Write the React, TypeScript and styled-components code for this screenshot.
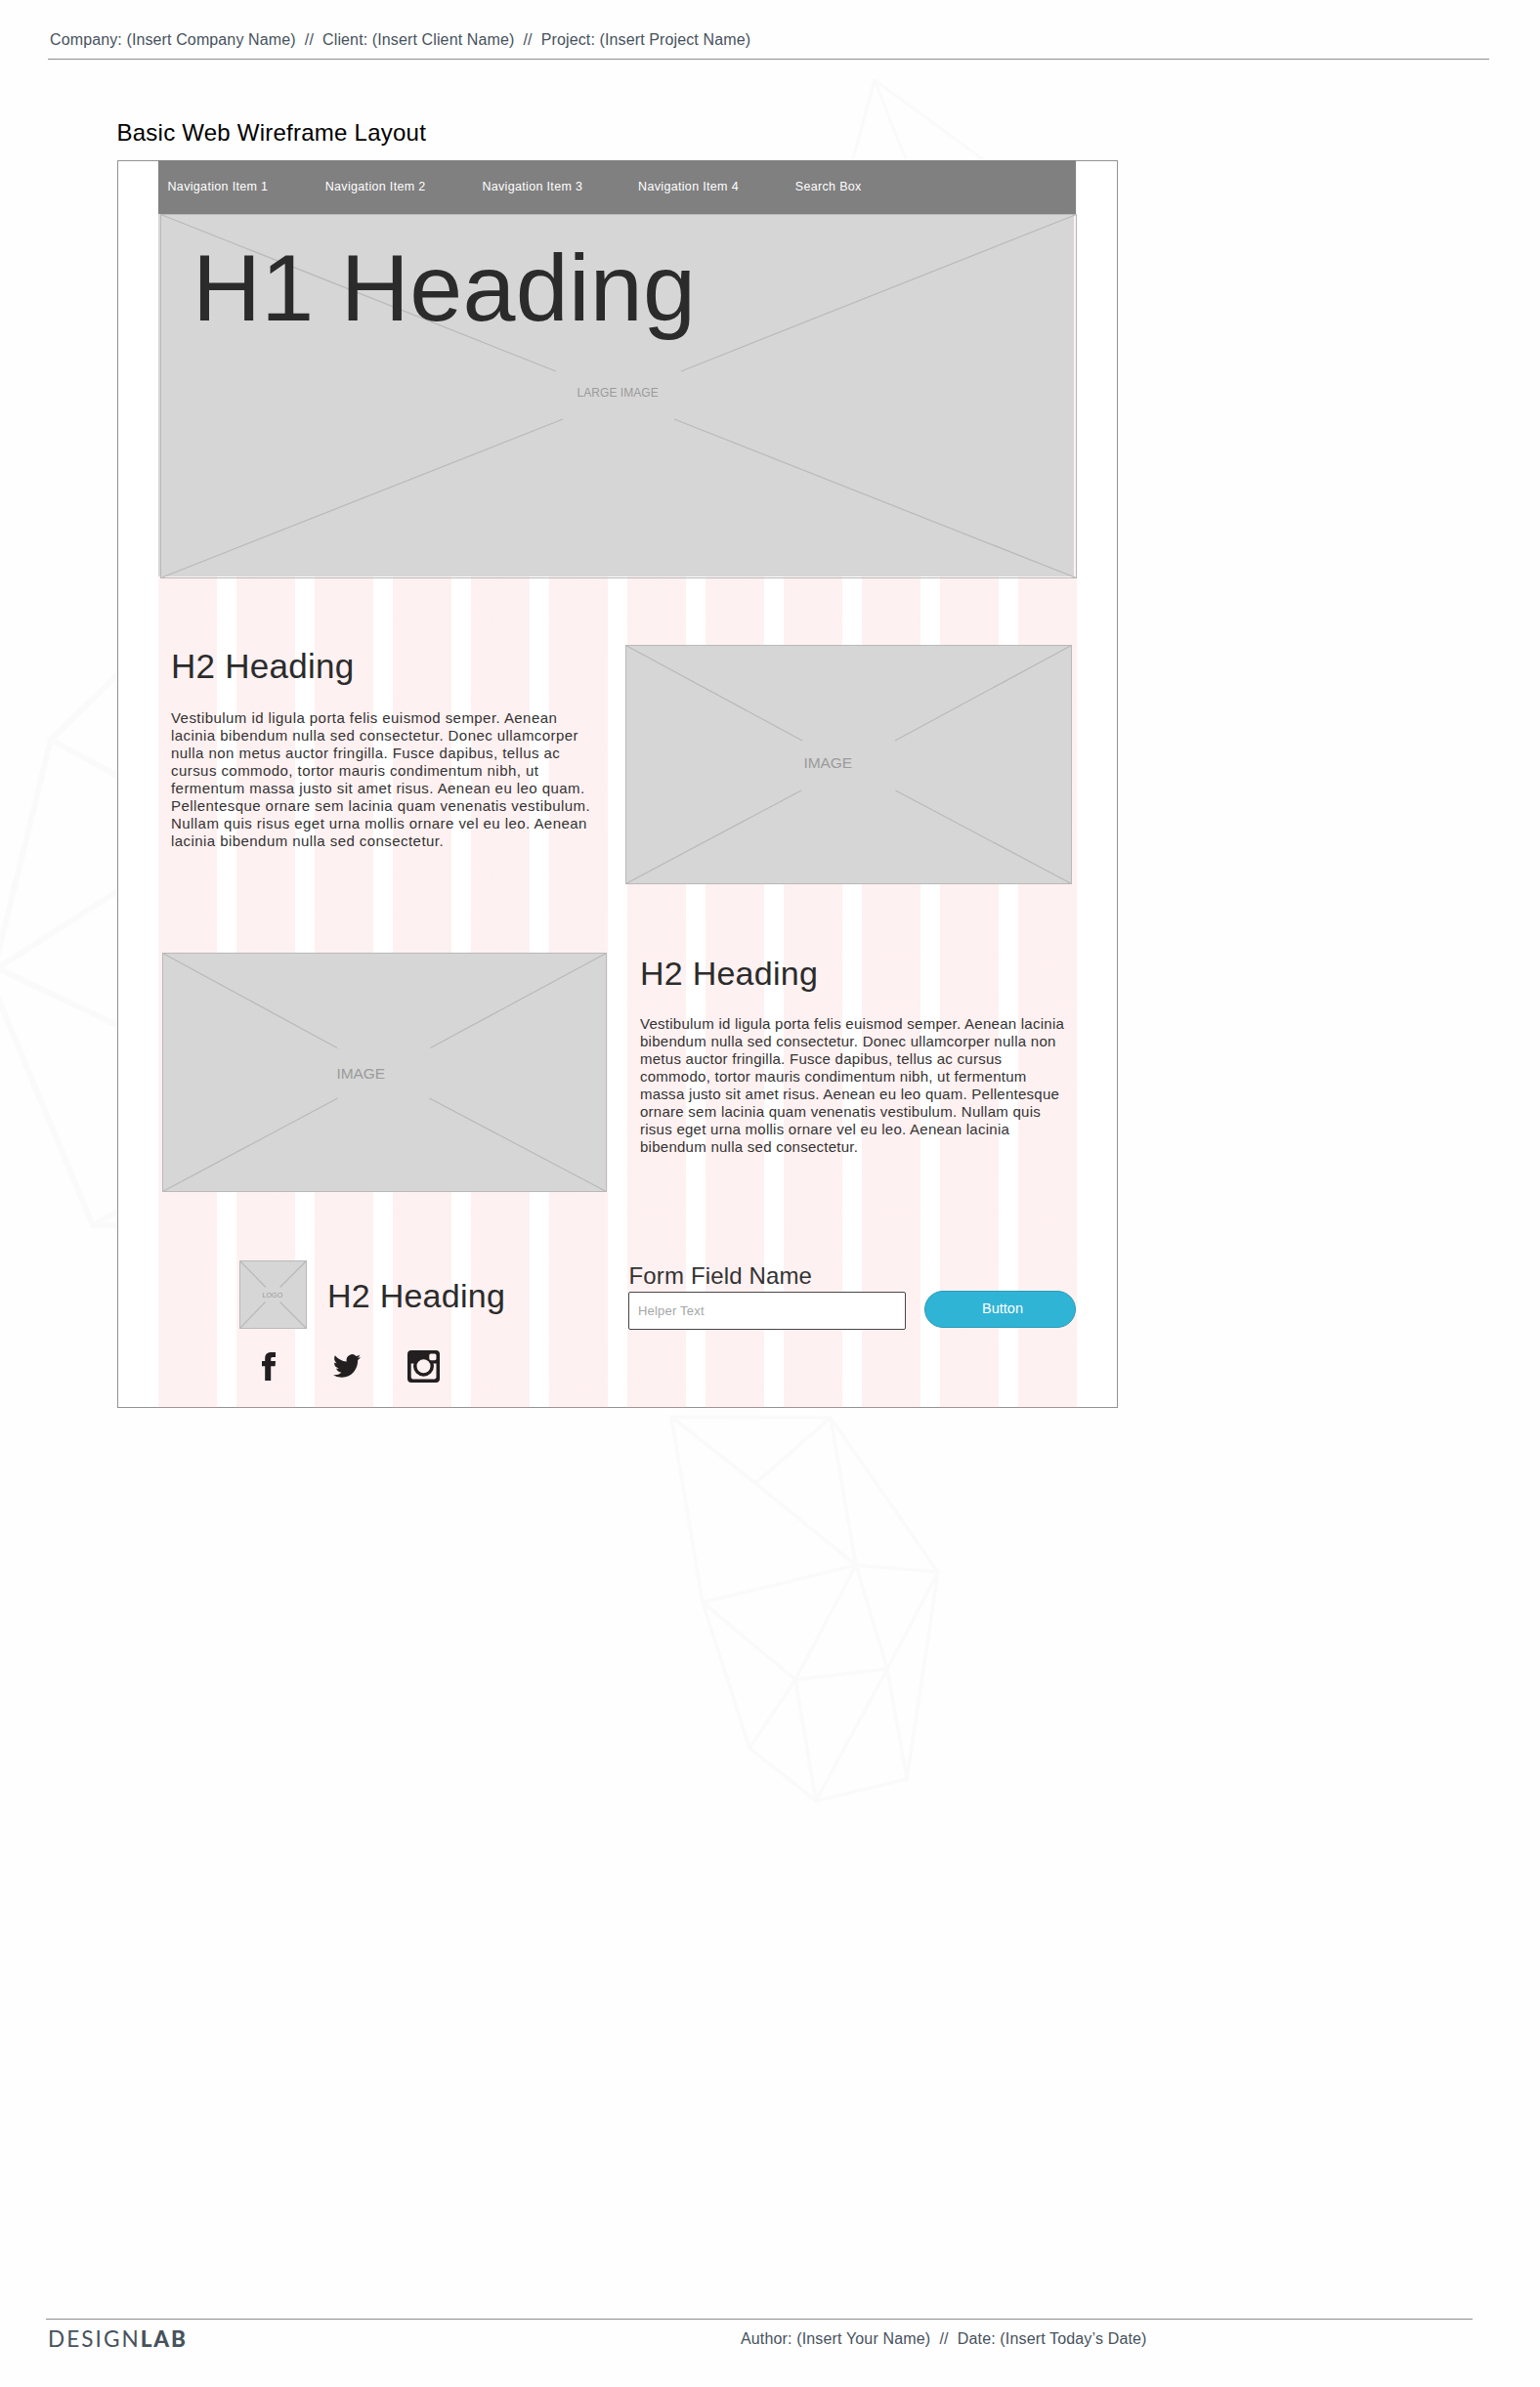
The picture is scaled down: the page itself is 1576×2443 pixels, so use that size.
import React from "react";
import styled, { createGlobalStyle } from "styled-components";

const GlobalStyle = createGlobalStyle`
  * { box-sizing: border-box; }
  body {
    margin: 0;
    background: #fefefe;
    font-family: "Liberation Sans", Arial, Helvetica, sans-serif;
  }
  h1, h2, p { margin: 0; font-weight: 400; }
`;

const Page = styled.div`
  position: relative;
  width: 1576px;
  height: 2443px;
  display: flex;
  flex-direction: column;
  overflow: hidden;
`;

const Backdrop = styled.svg`
  position: absolute;
  inset: 0;
  z-index: -1;
  fill: none;
  stroke: #fafafa;
  stroke-linejoin: round;
`;

const DocHeader = styled.header`
  height: 61px;
  margin: 0 52px 0 49px;
  padding: 31px 0 0 2px;
  border-bottom: 1px solid #8e8e8e;
`;

const MetaText = styled.div<{ $track: number }>`
  font-size: 16px;
  line-height: 20px;
  letter-spacing: ${(p) => p.$track}px;
  color: #47525d;
  white-space: pre;
`;

const BoardTitle = styled.h1`
  margin: 61px 0 14px 119.5px;
  font-size: 24px;
  line-height: 28px;
  letter-spacing: 0.24px;
  color: #000;
`;

const Frame = styled.main`
  width: 1024px;
  height: 1277px;
  margin-left: 120px;
  padding-left: 41px;
  border: 1px solid #929292;
  background: #fff;
`;

const Canvas = styled.div`
  width: 940px;
  height: 1277px;
  margin-top: -1px;
  background: repeating-linear-gradient(
    to right,
    rgba(250, 160, 160, 0.15) 0 60px,
    transparent 60px 80px
  );
`;

const Nav = styled.nav`
  display: grid;
  grid-template-columns: 161.2px 160.7px 159.7px 160.7px auto;
  align-items: center;
  width: 939px;
  height: 55px;
  padding: 0 0 2px 9.5px;
  background: #808080;
`;

const NavItem = styled.span`
  font-size: 12.5px;
  line-height: 16px;
  letter-spacing: 0.33px;
  color: #fff;
`;

const Hero = styled.section`
  display: grid;
  height: 373px;
  & > * { grid-area: 1 / 1; }
`;

const HeroTitle = styled.h1`
  z-index: 1;
  padding: 21px 0 0 35px;
  font-size: 97px;
  line-height: 110px;
  letter-spacing: 0.3px;
  color: #2b2b2b;
`;

const Box = styled.div<{ $w: number; $h: number; $ml?: number }>`
  position: relative;
  flex: none;
  width: ${(p) => p.$w}px;
  height: ${(p) => p.$h}px;
  margin-left: ${(p) => p.$ml ?? 0}px;
`;

const BoxArt = styled.svg`
  display: block;
  overflow: visible;
  fill: none;
  stroke: #b9b9b9;
`;

const BoxLabel = styled.span<{ $x: number; $y: number; $size: number; $track: number }>`
  position: absolute;
  left: ${(p) => p.$x}px;
  top: ${(p) => p.$y}px;
  font-size: ${(p) => p.$size}px;
  line-height: 20px;
  letter-spacing: ${(p) => p.$track}px;
  color: #9b9b9b;
  white-space: nowrap;
`;

const Row = styled.section<{ $top: number; $h: number }>`
  display: flex;
  align-items: flex-start;
  height: ${(p) => p.$h}px;
  margin-top: ${(p) => p.$top}px;
`;

const Column = styled.div<{ $w: number; $pl: number; $pt?: number }>`
  flex: none;
  width: ${(p) => p.$w}px;
  padding: ${(p) => p.$pt ?? 0}px 0 0 ${(p) => p.$pl}px;
`;

const Heading = styled.h2<{ $size: number }>`
  font-size: ${(p) => p.$size}px;
  line-height: 40px;
  letter-spacing: 0.25px;
  color: #2b2b2b;
`;

const Copy = styled.p<{ $top: number; $track: number }>`
  margin-top: ${(p) => p.$top}px;
  font-size: 15px;
  line-height: 18px;
  letter-spacing: ${(p) => p.$track}px;
  color: #333;
  span { display: block; white-space: nowrap; }
`;

const Brand = styled.div`
  display: flex;
  h2 { padding: 16px 0 0 21px; }
`;

const Socials = styled.div`
  display: flex;
  align-items: center;
  height: 34px;
  margin: 21px 0 0 23px;
  svg { display: block; fill: #231f20; }
`;

const FacebookIcon = styled.svg`
  width: 14px;
  height: 29px;
`;

const TwitterIcon = styled.svg`
  width: 28px;
  height: 24px;
  margin-left: 58.5px;
`;

const InstagramIcon = styled.svg`
  width: 33px;
  height: 33px;
  margin-left: 48.5px;
`;

const Form = styled.form`
  display: flex;
`;

const Field = styled.label`
  display: flex;
  flex-direction: column;
  gap: 2px;
  width: 284px;
  font-size: 24px;
  line-height: 28px;
  letter-spacing: 0.15px;
  color: #333;
  & > span { padding-left: 0.5px; }
`;

const Input = styled.input`
  height: 39px;
  padding: 0 9px;
  border: 1px solid #4a4546;
  border-radius: 2px;
  background: #fff;
  outline: none;
  font: 400 13px "Liberation Sans", Arial, sans-serif;
  letter-spacing: 0.2px;
  &::placeholder { color: #a6a6a6; opacity: 1; }
`;

const Button = styled.button`
  width: 155px;
  height: 38px;
  margin: 29px 0 0 19px;
  padding: 0 0 3px 5px;
  border: 1px solid #2a9cb8;
  border-radius: 19px;
  background: #30b4d5;
  color: #fff;
  font: 400 14.5px "Liberation Sans", Arial, sans-serif;
  letter-spacing: 0;
`;

const DocFooter = styled.footer`
  display: flex;
  height: 70px;
  margin: auto 69px 0 47px;
  border-top: 1px solid #8e8e8e;
`;

const Wordmark = styled.div`
  width: 710px;
  padding: 6px 0 0 2px;
  font-family: Lato, sans-serif;
  font-size: 22.5px;
  line-height: 28px;
  letter-spacing: 2.1px;
  color: #47525d;
  b { font-weight: 900; letter-spacing: 1.8px; }
`;

const FooterMeta = styled.div`
  padding: 10px 0 0 1px;
`;

type Pt = [number, number];

/* A crossed image box; `gap` holds the four inner ends of the diagonals. */
function Placeholder(props: {
  w: number; h: number; ml?: number;
  fill: [number, number, number, number];
  edge: [number, number, number, number];
  gap: [Pt, Pt, Pt, Pt];
  label: string; lx: number; ly: number; size: number; track: number;
}) {
  const { w, h, fill, edge, gap } = props;
  const [l, t, r, b] = edge;
  const corners: Pt[] = [[l, t], [r, t], [l, b], [r, b]];
  return (
    <Box $w={w} $h={h} $ml={props.ml}>
      <BoxArt width={w} height={h}>
        <rect x={fill[0]} y={fill[1]} width={fill[2]} height={fill[3]} fill="#d6d6d6" stroke="none" />
        <rect x={l} y={t} width={r - l} height={b - t} />
        {corners.map(([x, y], i) => (
          <line key={i} x1={x} y1={y} x2={gap[i][0]} y2={gap[i][1]} strokeWidth={1.2} />
        ))}
      </BoxArt>
      <BoxLabel $x={props.lx} $y={props.ly} $size={props.size} $track={props.track}>{props.label}</BoxLabel>
    </Box>
  );
}

const navItems = ["Navigation Item 1", "Navigation Item 2", "Navigation Item 3", "Navigation Item 4", "Search Box"];

const copyLeft = [
  "Vestibulum id ligula porta felis euismod semper. Aenean",
  "lacinia bibendum nulla sed consectetur. Donec ullamcorper",
  "nulla non metus auctor fringilla. Fusce dapibus, tellus ac",
  "cursus commodo, tortor mauris condimentum nibh, ut",
  "fermentum massa justo sit amet risus. Aenean eu leo quam.",
  "Pellentesque ornare sem lacinia quam venenatis vestibulum.",
  "Nullam quis risus eget urna mollis ornare vel eu leo. Aenean",
  "lacinia bibendum nulla sed consectetur.",
];

const copyRight = [
  "Vestibulum id ligula porta felis euismod semper. Aenean lacinia",
  "bibendum nulla sed consectetur. Donec ullamcorper nulla non",
  "metus auctor fringilla. Fusce dapibus, tellus ac cursus",
  "commodo, tortor mauris condimentum nibh, ut fermentum",
  "massa justo sit amet risus. Aenean eu leo quam. Pellentesque",
  "ornare sem lacinia quam venenatis vestibulum. Nullam quis",
  "risus eget urna mollis ornare vel eu leo. Aenean lacinia",
  "bibendum nulla sed consectetur.",
];

export default function App() {
  return (
    <>
      <GlobalStyle />
      <Page>
        <Backdrop width={1576} height={2443}>
          <path strokeWidth={3} d="M872 166L895 82L928 166M895 82L1010 166" />
          <path strokeWidth={6} d="M122 689L52 757L122 795M52 757L-3 980M122 911L-3 991L122 1050M-6 1012L95 1254L122 1239M95 1254H122" />
          <path
            strokeWidth={3.6}
            d="M687 1450L850 1451L960 1609L928 1821L835 1843L767 1789L719 1640ZL773 1518L876 1602L960 1609L908 1708L928 1821M773 1518L850 1451L876 1602L908 1708L835 1843L814 1719L767 1789M719 1640L876 1602L814 1719L908 1708M719 1640L814 1719"
          />
        </Backdrop>

        <DocHeader>
          <MetaText $track={0.12}>{"Company: (Insert Company Name)  //  Client: (Insert Client Name)  //  Project: (Insert Project Name)"}</MetaText>
        </DocHeader>

        <BoardTitle>Basic Web Wireframe Layout</BoardTitle>

        <Frame>
          <Canvas>
            <Nav>
              {navItems.map((n) => <NavItem key={n}>{n}</NavItem>)}
            </Nav>

            <Hero>
              <Placeholder
                w={940} h={373}
                fill={[0, 0, 937, 371]} edge={[2.5, 0.5, 939.5, 372.5]}
                gap={[[407, 161], [535, 161], [414, 210], [528, 210]]}
                label="LARGE IMAGE" lx={428.5} ly={173} size={12} track={0.05}
              />
              <HeroTitle>H1 Heading</HeroTitle>
            </Hero>

            <Row $top={68} $h={245}>
              <Column $w={478} $pl={13} $pt={2}>
                <Heading $size={35}>H2 Heading</Heading>
                <Copy $top={24} $track={0.44}>{copyLeft.map((t) => <span key={t}>{t}</span>)}</Copy>
              </Column>
              <Placeholder
                w={457} h={245}
                fill={[0, 0, 457, 245]} edge={[0.5, 0.5, 456.5, 244.5]}
                gap={[[181, 98], [276, 98], [180, 149], [276.5, 149]]}
                label="IMAGE" lx={182.5} ly={111} size={15.5} track={-0.1}
              />
            </Row>

            <Row $top={70} $h={245}>
              <Placeholder
                w={455} h={245} ml={4}
                fill={[0, 0, 455, 245]} edge={[0.5, 0.5, 454.5, 244.5]}
                gap={[[179, 97.5], [274.5, 97.5], [179.5, 149], [273.5, 149]]}
                label="IMAGE" lx={178.5} ly={114} size={15.5} track={-0.1}
              />
              <Column $w={470} $pl={34} $pt={1}>
                <Heading $size={34}>H2 Heading</Heading>
                <Copy $top={23} $track={0.26}>{copyRight.map((t) => <span key={t}>{t}</span>)}</Copy>
              </Column>
            </Row>

            <Row $top={70} $h={151}>
              <Column $w={481} $pl={83}>
                <Brand>
                  <Placeholder
                    w={69} h={70}
                    fill={[0, 0, 69, 70]} edge={[0.5, 0.5, 68.5, 69.5]}
                    gap={[[27, 27.5], [41.5, 27.5], [26.5, 42.5], [41.5, 42.5]]}
                    label="LOGO" lx={23.5} ly={25.5} size={7.2} track={0}
                  />
                  <Heading $size={34}>H2 Heading</Heading>
                </Brand>
                <Socials>
                  <FacebookIcon viewBox="0 0 14 29">
                    <path d="M3.2 29V14.2H0V8.9H3.2V6.6C3.2 2.3 5 0 9.7 0H14V5H11.3C9.4 5 9.2 5.7 9.2 7.1V8.9H14L13.6 14.2H9.2V29Z" />
                  </FacebookIcon>
                  <TwitterIcon viewBox="0 2.1 24 19.8" preserveAspectRatio="none">
                    <path d="M23.953 4.57a10 10 0 01-2.825.775 4.958 4.958 0 002.163-2.723c-.951.555-2.005.959-3.127 1.184a4.92 4.92 0 00-8.384 4.482C7.69 8.095 4.067 6.13 1.64 3.162a4.822 4.822 0 00-.666 2.475c0 1.71.87 3.213 2.188 4.096a4.904 4.904 0 01-2.228-.616v.06a4.923 4.923 0 003.946 4.827 4.996 4.996 0 01-2.212.085 4.936 4.936 0 004.604 3.417 9.867 9.867 0 01-6.102 2.105c-.39 0-.779-.023-1.17-.067a13.995 13.995 0 007.557 2.209c9.053 0 13.998-7.496 13.998-13.985 0-.21 0-.42-.015-.63A9.935 9.935 0 0024 4.59z" />
                  </TwitterIcon>
                  <InstagramIcon viewBox="0 0 33 33">
                    <path fillRule="evenodd" d="M4 0H29Q33 0 33 4V29Q33 33 29 33H4Q0 33 0 29V4Q0 0 4 0ZM24 3.5Q22.3 3.5 22.3 5V8.6Q22.3 10.2 24 10.2H27.8Q29.5 10.2 29.5 8.6V5Q29.5 3.5 27.8 3.5ZM3.7 13.4V27.6Q3.7 29.4 5.5 29.4H27.7Q29.5 29.4 29.5 27.6V13.4H26.5Q27 14.8 27 16.2A10.5 10.5 0 1 1 6 16.2Q6 14.8 6.5 13.4ZM16.5 9.3A7 7 0 1 0 16.5 23.3A7 7 0 1 0 16.5 9.3Z" />
                  </InstagramIcon>
                </Socials>
              </Column>
              <Column $w={459} $pl={0} $pt={2}>
                <Form>
                  <Field>
                    <span>Form Field Name</span>
                    <Input placeholder="Helper Text" />
                  </Field>
                  <Button type="button">Button</Button>
                </Form>
              </Column>
            </Row>
          </Canvas>
        </Frame>

        <DocFooter>
          <Wordmark>DESIGN<b>LAB</b></Wordmark>
          <FooterMeta>
            <MetaText $track={0.15}>{"Author: (Insert Your Name)  //  Date: (Insert Today’s Date)"}</MetaText>
          </FooterMeta>
        </DocFooter>
      </Page>
    </>
  );
}
